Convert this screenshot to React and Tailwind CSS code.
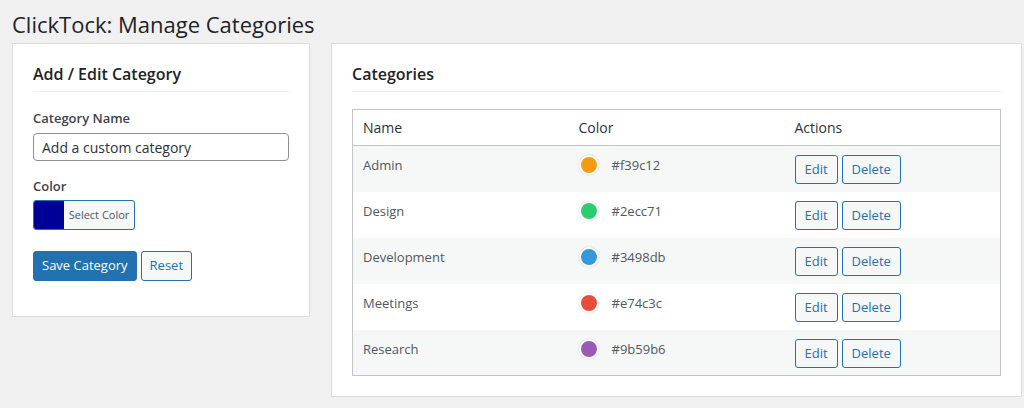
import React from 'react'

const CATEGORIES = [
  { name: 'Admin', color: '#f39c12' },
  { name: 'Design', color: '#2ecc71' },
  { name: 'Development', color: '#3498db' },
  { name: 'Meetings', color: '#e74c3c' },
  { name: 'Research', color: '#9b59b6' },
]

function OutlineButton({ children }) {
  return (
    <button className="h-[29px] px-[9px] rounded-[3px] border border-[#2271b1] bg-[#f6f7f7] text-[13px] leading-[27px] text-[#2271b1]">
      {children}
    </button>
  )
}

export default function App() {
  return (
    <div className="min-h-[408px] bg-[#f0f0f1] pl-3 pr-[2px] pt-[9px] font-['Open_Sans','Noto_Sans',sans-serif] text-[#1d2327]">
      <h1 className="text-[22px] leading-[30px] mb-[4px] text-[#1d2327]">ClickTock: Manage Categories</h1>

      <div className="flex items-start gap-[21px]">
        {/* Formulário */}
        <section className="w-[298px] shrink-0 bg-white border border-[#dcdcde] px-5 pt-5 pb-[35px]">
          <h2 className="text-[16px] font-semibold leading-[22px] pb-[6px] border-b border-[#f0f0f1] -mt-[1px]">
            Add / Edit Category
          </h2>

          <label className="block mt-[17px] text-[13px] font-semibold leading-[18px] text-[#3c434a]">Category Name</label>
          <input
            className="mt-[6px] block w-full h-[28px] px-[8px] rounded-[4px] border border-[#8c8f94] text-[14px] text-[#2c3338] placeholder:text-[#2c3338] outline-none"
            placeholder="Add a custom category"
          />

          <label className="block mt-[16px] text-[13px] font-semibold leading-[18px] text-[#3c434a]">Color</label>
          <button className="mt-[5px] flex h-[30px] w-[102px] overflow-hidden rounded-[3px] border border-[#2271b1] bg-[#f6f7f7]">
            <span className="w-[30px] h-full bg-[#000099]" />
            <span className="flex-1 text-[11px] leading-[28px] text-[#50575e] text-center">Select Color</span>
          </button>

          <div className="mt-[21px] flex gap-[4px]">
            <button className="h-[30px] px-[8px] rounded-[3px] bg-[#2271b1] border border-[#2271b1] text-[13px] text-white">
              Save Category
            </button>
            <button className="h-[30px] px-[8px] rounded-[3px] border border-[#2271b1] bg-[#f6f7f7] text-[13px] text-[#2271b1]">
              Reset
            </button>
          </div>
        </section>

        {/* Lista */}
        <section className="flex-1 bg-white border border-[#dcdcde] px-5 pt-5 pb-5">
          <h2 className="text-[16px] font-semibold leading-[22px] pb-[6px] -mt-[1px] border-b border-[#f0f0f1]">Categories</h2>

          <table className="mt-[17px] w-full table-fixed border-collapse border border-[#c3c4c7] text-[13px]">
            <thead>
              <tr className="border-b border-[#c3c4c7]">
                <th className="h-[36px] px-[10px] text-left font-normal text-[14px] text-[#2c3338]">Name</th>
                <th className="h-[36px] px-[10px] text-left font-normal text-[14px] text-[#2c3338]">Color</th>
                <th className="h-[36px] px-[10px] text-left font-normal text-[14px] text-[#2c3338]">Actions</th>
              </tr>
            </thead>
            <tbody>
              {CATEGORIES.map((cat, i) => (
                <tr key={cat.name} className={i % 2 === 0 ? 'bg-[#f6f7f7]' : 'bg-white'}>
                  <td className="h-[46px] align-top px-[10px] pt-[10px] text-[#50575e] leading-[18px]">{cat.name}</td>
                  <td className="h-[46px] align-top px-[10px] pt-[9px] leading-[18px]">
                    <div className="flex items-center">
                      <span
                        className="block w-[20px] h-[20px] rounded-full border-2 border-white shadow-[0_0_2px_rgba(0,0,0,0.2)]"
                        style={{ backgroundColor: cat.color }}
                      />
                      <span className="ml-[13px] text-[#50575e]">{cat.color}</span>
                    </div>
                  </td>
                  <td className="h-[46px] align-top px-[10px] pt-[9px]">
                    <div className="flex gap-[4px]">
                      <OutlineButton>Edit</OutlineButton>
                      <OutlineButton>Delete</OutlineButton>
                    </div>
                  </td>
                </tr>
              ))}
            </tbody>
          </table>
        </section>
      </div>
    </div>
  )
}
